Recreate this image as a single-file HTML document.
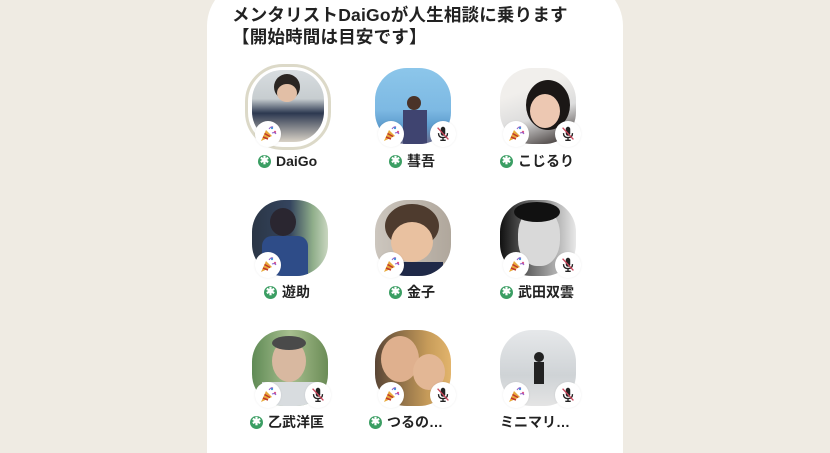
<!DOCTYPE html>
<html style="width:830px;height:453px;overflow:hidden;margin:0"><head><meta charset="utf-8"><style>
body{margin:0;width:830px;height:453px;background:#efebe3;overflow:hidden;font-family:"Liberation Sans","Noto Sans CJK JP",sans-serif;position:relative}
.card{position:absolute;left:207px;top:-20px;width:416px;height:473px;background:#fff;border-radius:46px 46px 0 0}
.title{position:absolute;left:232px;top:4px;font-size:17.5px;font-weight:bold;color:#222;line-height:22px;letter-spacing:0.2px}
.av{position:absolute;width:76px;height:76px;border-radius:42%;overflow:hidden}
.ring{position:absolute;width:80px;height:80px;border:3px solid #dcd9c8;border-radius:44%}
.b{position:absolute;width:26px;height:26px;border-radius:50%;background:#fff;box-shadow:0 0 2px rgba(0,0,0,.08);display:flex;align-items:center;justify-content:center}
.n{position:absolute;font-size:14px;font-weight:bold;color:#222;height:20px;line-height:20px;display:flex;align-items:center;white-space:nowrap}
.g{width:13px;height:13px;border-radius:50%;background:#3b9e63;color:#fff;font-size:11px;line-height:13px;text-align:center;margin-right:5px;font-weight:bold}
</style></head><body>
<div class="card"></div>
<div class="title">メンタリストDaiGoが人生相談に乗ります<br>【開始時間は目安です】</div>

<div class="ring" style="left:245px;top:64px"></div>
<div class="av" style="left:252px;top:70px;width:72px;height:72px;background:linear-gradient(180deg,#d8dde0 0%,#c7cdd0 40%,#2c3850 60%,#d9d2c6 100%)"><div style="position:absolute;left:22px;top:4px;width:26px;height:26px;border-radius:50%;background:#2a2522"></div><div style="position:absolute;left:25px;top:14px;width:20px;height:18px;border-radius:50%;background:#e2bfa6"></div></div>
<div class="av" style="left:375px;top:68px;background:linear-gradient(180deg,#8cc6ea 0%,#7db9e3 55%,#5f9ecf 75%,#6a6a8c 100%)"><div style="position:absolute;left:32px;top:28px;width:14px;height:14px;border-radius:50%;background:#4a3328"></div><div style="position:absolute;left:28px;top:42px;width:24px;height:34px;background:#3f4470"></div></div>
<div class="av" style="left:500px;top:68px;background:linear-gradient(160deg,#f1efec 30%,#ddd 60%,#2a2220 100%)"><div style="position:absolute;left:26px;top:12px;width:44px;height:50px;border-radius:50%;background:#1b1716"></div><div style="position:absolute;left:30px;top:26px;width:30px;height:34px;border-radius:50%;background:#edc8b2"></div></div>

<div class="av" style="left:252px;top:200px;background:linear-gradient(90deg,#2b3646 0%,#34445e 50%,#8fae8a 80%,#c9d6c0 100%)"><div style="position:absolute;left:18px;top:8px;width:26px;height:28px;border-radius:50%;background:#2a2630"></div><div style="position:absolute;left:10px;top:36px;width:46px;height:40px;background:#2e4c88;border-radius:10px 10px 0 0"></div></div>
<div class="av" style="left:375px;top:200px;background:linear-gradient(90deg,#ccc6be,#b0a79c)"><div style="position:absolute;left:10px;top:4px;width:54px;height:44px;border-radius:50%;background:#4e3b2e"></div><div style="position:absolute;left:16px;top:22px;width:42px;height:40px;border-radius:50%;background:#e9c1a0"></div><div style="position:absolute;left:8px;top:62px;width:60px;height:20px;background:#1f2948"></div></div>
<div class="av" style="left:500px;top:200px;background:linear-gradient(90deg,#111 0%,#555 30%,#e8e8e8 100%)"><div style="position:absolute;left:18px;top:8px;width:42px;height:58px;border-radius:45%;background:#d9d9d9"></div><div style="position:absolute;left:14px;top:2px;width:46px;height:20px;border-radius:50%;background:#111"></div></div>

<div class="av" style="left:252px;top:330px;background:linear-gradient(90deg,#5f8a55,#a7bf8f 50%,#6b8c56)"><div style="position:absolute;left:20px;top:10px;width:34px;height:42px;border-radius:50%;background:#d8b8a0"></div><div style="position:absolute;left:20px;top:6px;width:34px;height:14px;border-radius:50%;background:#4a4a4a"></div><div style="position:absolute;left:10px;top:52px;width:56px;height:24px;background:#d8dcdf"></div></div>
<div class="av" style="left:375px;top:330px;background:linear-gradient(90deg,#5a4636,#c79c5a 70%,#e2b46c)"><div style="position:absolute;left:6px;top:6px;width:38px;height:46px;border-radius:50%;background:#dfb08e"></div><div style="position:absolute;left:38px;top:24px;width:32px;height:36px;border-radius:50%;background:#e3b795"></div></div>
<div class="av" style="left:500px;top:330px;background:linear-gradient(180deg,#e6e8ea,#cfd3d6 60%,#e4e4e4)"><div style="position:absolute;left:34px;top:22px;width:10px;height:10px;border-radius:50%;background:#222"></div><div style="position:absolute;left:34px;top:32px;width:10px;height:22px;background:#222"></div></div>

<svg width="0" height="0" style="position:absolute"><defs>
<symbol id="pp" viewBox="0 0 20 20"><path d="M3 17 L8 6 L14 12 Z" fill="#e8a93a"/><path d="M5 13 L10 15 M6.5 9.5 L12 12.5" stroke="#c0392b" stroke-width="1.5"/><circle cx="14" cy="4" r="1.2" fill="#3a9bd9"/><circle cx="17" cy="8" r="1.2" fill="#e05a8a"/><path d="M11 5 q2 -3 4 -2 M14 9 q3 -1 4 1" stroke="#8e5bc8" stroke-width="1" fill="none"/></symbol>
<symbol id="mic" viewBox="0 0 20 20"><rect x="7.5" y="2" width="5" height="10" rx="2.5" fill="#222"/><path d="M5 9 q0 5 5 5 q5 0 5 -5 M10 14 V17 M7 17 H13" stroke="#222" stroke-width="1.5" fill="none"/><path d="M4 3 L16 16" stroke="#c9455a" stroke-width="1.5"/></symbol>
</defs></svg>

<div class="b" style="left:255px;top:121px"><svg width="20" height="20"><use href="#pp"/></svg></div>
<div class="b" style="left:378px;top:121px"><svg width="20" height="20"><use href="#pp"/></svg></div>
<div class="b" style="left:430px;top:121px"><svg width="18" height="18"><use href="#mic"/></svg></div>
<div class="b" style="left:503px;top:121px"><svg width="20" height="20"><use href="#pp"/></svg></div>
<div class="b" style="left:555px;top:121px"><svg width="18" height="18"><use href="#mic"/></svg></div>

<div class="b" style="left:255px;top:252px"><svg width="20" height="20"><use href="#pp"/></svg></div>
<div class="b" style="left:378px;top:252px"><svg width="20" height="20"><use href="#pp"/></svg></div>
<div class="b" style="left:503px;top:252px"><svg width="20" height="20"><use href="#pp"/></svg></div>
<div class="b" style="left:555px;top:252px"><svg width="18" height="18"><use href="#mic"/></svg></div>

<div class="b" style="left:255px;top:382px"><svg width="20" height="20"><use href="#pp"/></svg></div>
<div class="b" style="left:305px;top:382px"><svg width="18" height="18"><use href="#mic"/></svg></div>
<div class="b" style="left:378px;top:382px"><svg width="20" height="20"><use href="#pp"/></svg></div>
<div class="b" style="left:430px;top:382px"><svg width="18" height="18"><use href="#mic"/></svg></div>
<div class="b" style="left:503px;top:382px"><svg width="20" height="20"><use href="#pp"/></svg></div>
<div class="b" style="left:555px;top:382px"><svg width="18" height="18"><use href="#mic"/></svg></div>

<div class="n" style="left:258px;top:151px"><span class="g">✱</span>DaiGo</div>
<div class="n" style="left:389px;top:151px"><span class="g">✱</span>彗吾</div>
<div class="n" style="left:500px;top:151px"><span class="g">✱</span>こじるり</div>
<div class="n" style="left:264px;top:282px"><span class="g">✱</span>遊助</div>
<div class="n" style="left:389px;top:282px"><span class="g">✱</span>金子</div>
<div class="n" style="left:500px;top:282px"><span class="g">✱</span>武田双雲</div>
<div class="n" style="left:250px;top:412px"><span class="g">✱</span>乙武洋匡</div>
<div class="n" style="left:369px;top:412px"><span class="g">✱</span>つるの…</div>
<div class="n" style="left:500px;top:412px">ミニマリ…</div>
</body></html>
